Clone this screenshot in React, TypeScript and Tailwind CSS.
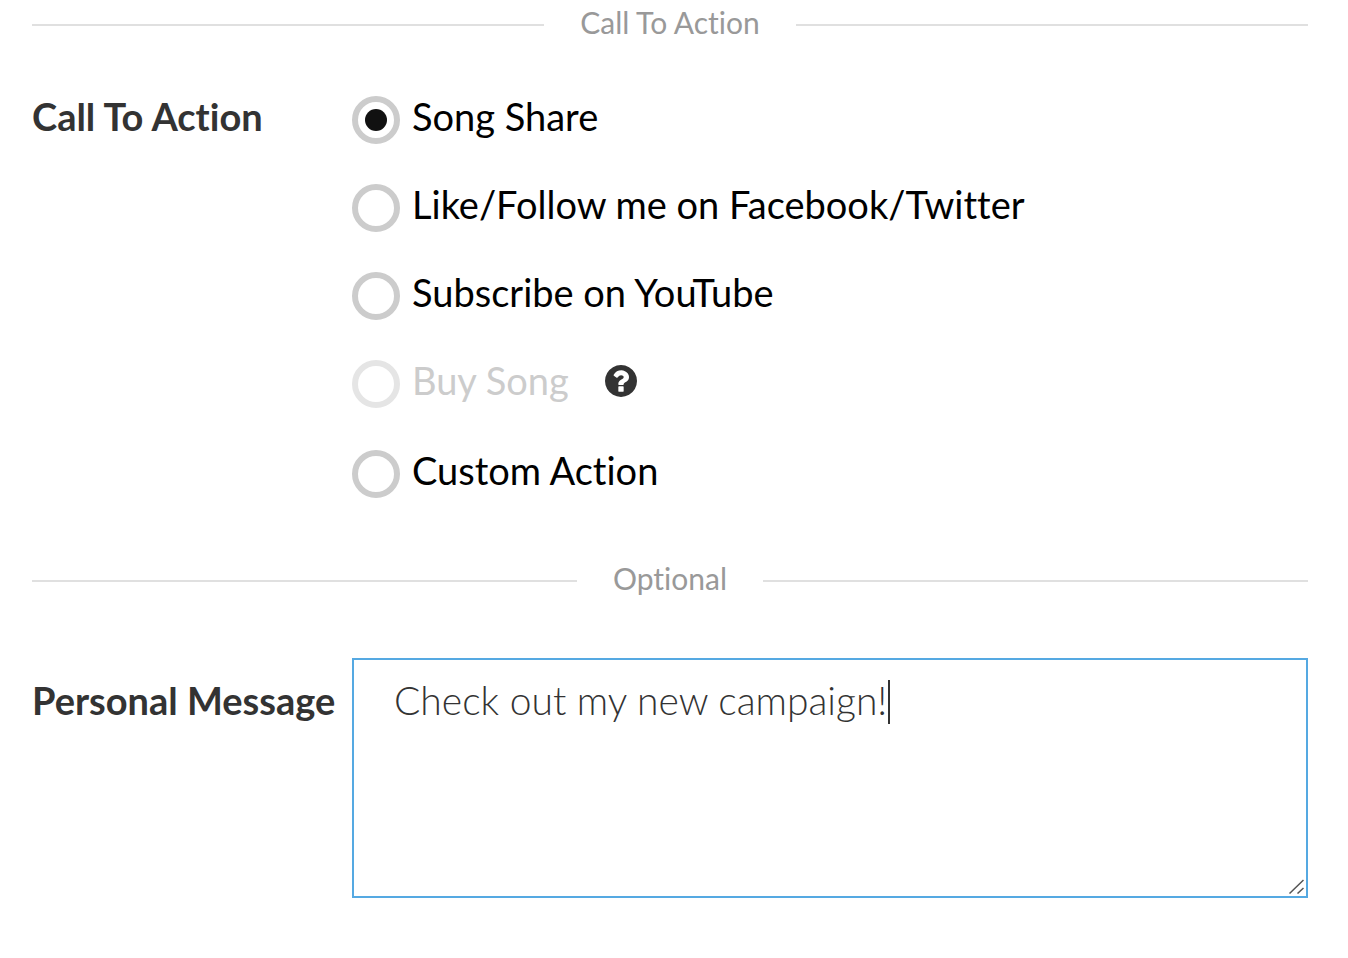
import { useState } from "react";

const ACTIONS = [
  { id: "share", label: "Song Share" },
  { id: "follow", label: "Like/Follow me on Facebook/Twitter" },
  { id: "subscribe", label: "Subscribe on YouTube" },
  { id: "buy", label: "Buy Song", disabled: true },
  { id: "custom", label: "Custom Action" },
];

function Divider({ title }: { title: string }) {
  return (
    <div className="flex items-center gap-9">
      <div className="mt-1.5 h-0.5 flex-1 bg-[#e0e0e0]" />
      <h2 className="text-[30px] leading-11 font-normal text-[#999]">{title}</h2>
      <div className="mt-1.5 h-0.5 flex-1 bg-[#e0e0e0]" />
    </div>
  );
}

function QuestionIcon() {
  return (
    <svg viewBox="128 128 1536 1536" fill="currentColor" className="size-8" aria-hidden="true">
      <path d="M1024 1376v-192q0-14-9-23t-23-9h-192q-14 0-23 9t-9 23v192q0 14 9 23t23 9h192q14 0 23-9t9-23zm256-672q0-88-55.5-163t-138.5-116-170-41q-243 0-371 213-15 24 8 42l132 100q7 6 19 6 16 0 25-12 53-68 86-92 34-24 86-24 48 0 85.5 26t37.5 59q0 38-20 61t-68 45q-63 28-115.5 86.5t-52.5 125.5v36q0 14 9 23t23 9h192q14 0 23-9t9-23q0-19 21.5-49.5t54.5-49.5q32-18 49-28.5t46-35 44.5-48 28-60.5 12.5-81zm384 192q0 209-103 385.5t-279.5 279.5-385.5 103-385.5-103-279.5-279.5-103-385.5 103-385.5 279.5-279.5 385.5-103 385.5 103 279.5 279.5 103 385.5z" />
    </svg>
  );
}

export default function App() {
  const [action, setAction] = useState("share");
  const [message, setMessage] = useState("Check out my new campaign!");

  return (
    <form className="min-h-screen bg-white pr-10 pl-8 font-['Lato',sans-serif] text-[38px] text-[#333] [font-variant-ligatures:none]">
      <Divider title="Call To Action" />

      {/* Call to action */}
      <div role="radiogroup" aria-labelledby="cta-label" className="flex pt-13 pb-[58px]">
        <div id="cta-label" className="w-80 shrink-0 leading-10 font-bold">
          Call To Action
        </div>
        <div className="flex flex-1 flex-col gap-10">
          {ACTIONS.map(({ id, label, disabled }) => (
            <div key={id} className="flex items-start">
              <label
                className={
                  disabled
                    ? "flex items-start gap-3 leading-10 text-[#ccc]"
                    : "flex items-start gap-3 leading-10 text-black"
                }
              >
                <input
                  type="radio"
                  name="action"
                  value={id}
                  checked={action === id}
                  disabled={disabled}
                  onChange={() => setAction(id)}
                  className="grid size-12 shrink-0 appearance-none place-items-center rounded-full border-6 border-[#ccc] bg-white before:size-[22px] before:rounded-full checked:before:bg-[#111] disabled:border-[#e5e5e5]"
                />
                {label}
              </label>
              {disabled && (
                <button type="button" aria-label="Help" className="ml-9 pt-[5px] pb-[13px]">
                  <QuestionIcon />
                </button>
              )}
            </div>
          ))}
        </div>
      </div>

      <Divider title="Optional" />

      {/* Personal message */}
      <div className="flex pt-[58px] pb-15">
        <label htmlFor="message" className="w-80 shrink-0 pt-[22px] leading-10 font-bold">
          Personal Message
        </label>
        <div className="relative flex min-w-0 flex-1">
          <textarea
            id="message"
            value={message}
            onChange={(e) => setMessage(e.target.value)}
            className="h-60 w-full resize-none border-2 border-[#55a9e2] px-10 py-[18px] text-[39px] leading-11 font-light caret-transparent outline-none"
          />
          {/* Caret */}
          <span className="pointer-events-none absolute top-[22px] left-[536px] h-11 w-0.5 bg-[#333]" />
          {/* Resize grip */}
          <svg
            viewBox="0 0 16 16"
            className="pointer-events-none absolute right-1 bottom-1 size-4"
            stroke="#555"
            strokeWidth="1.5"
            aria-hidden="true"
          >
            <path d="M1.5 15.5 15.5 2M9.5 15.5l6-5.5" />
          </svg>
        </div>
      </div>
    </form>
  );
}
